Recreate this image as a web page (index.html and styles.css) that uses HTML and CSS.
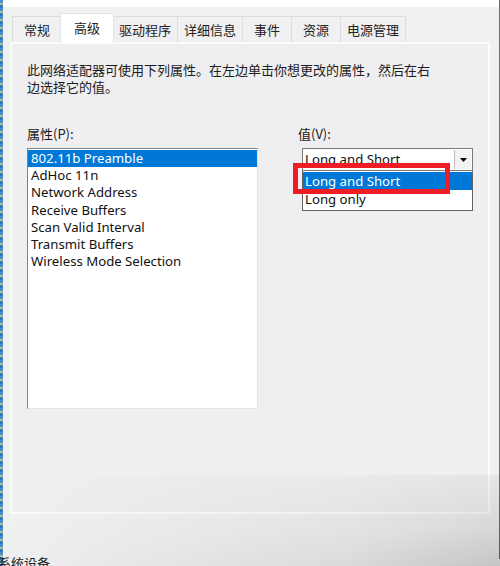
FILE: index.html
```html
<!DOCTYPE html>
<html>
<head>
<meta charset="utf-8">
<link rel="stylesheet" href="styles.css">
</head>
<body>
<div class="screen">
  <div class="edge"></div>
  <div class="window">
    <div class="titlestrip"></div>
    <div class="tabs">
      <div class="tab">常规</div>
      <div class="tab active">高级</div>
      <div class="tab">驱动程序</div>
      <div class="tab">详细信息</div>
      <div class="tab">事件</div>
      <div class="tab">资源</div>
      <div class="tab">电源管理</div>
    </div>
    <div class="panel">
      <p class="desc">此网络适配器可使用下列属性。在左边单击你想更改的属性，然后在右<br>边选择它的值。</p>
      <div class="cols">
        <div class="col-left">
          <div class="label">属性(P):</div>
          <div class="listbox">
            <div class="item selected">802.11b Preamble</div>
            <div class="item">AdHoc 11n</div>
            <div class="item">Network Address</div>
            <div class="item">Receive Buffers</div>
            <div class="item">Scan Valid Interval</div>
            <div class="item">Transmit Buffers</div>
            <div class="item">Wireless Mode Selection</div>
          </div>
        </div>
        <div class="col-right">
          <div class="label">值(V):</div>
          <div class="combo">
            <div class="combo-box">
              <span class="combo-text">Long and Short</span>
              <span class="combo-btn"><svg width="7" height="4" viewBox="0 0 7 4"><path d="M0 0H7L3.5 4Z" fill="#000"/></svg></span>
            </div>
            <div class="dropdown">
              <div class="opt selected">Long and Short</div>
              <div class="opt">Long only</div>
            </div>
            <div class="highlight"></div>
          </div>
        </div>
      </div>
    </div>
    <div class="footer"></div>
  </div>
  <div class="status">系统设备</div>
  <div class="shadow"></div>
</div>
</body>
</html>
```
FILE: styles.css
```css
html, body {
  margin: 0;
  padding: 0;
}
body {
  width: 500px;
  height: 566px;
  overflow: hidden;
  background: #f0eff1;
  font-family: "Noto Sans", "Noto Sans CJK SC", sans-serif;
  font-size: 13px;
  color: #1a1a1a;
}
.screen {
  position: relative;
  width: 500px;
  height: 566px;
  display: flex;
  overflow: hidden;
}
.edge {
  width: 3px;
  flex: none;
  background: repeating-linear-gradient(180deg, #4d8fc9 0 3px, #9fc3a0 3px 5px, #3a78b8 5px 8px);
}
.window {
  flex: 1;
  display: flex;
  flex-direction: column;
  background: #f0eff1;
  border-right: 3px solid #6e6e6e;
  height: 559px;
}
.titlestrip {
  height: 7px;
  background: #ffffff;
  flex: none;
}
.tabs {
  display: flex;
  padding-left: 9px;
  margin-top: 6px;
  align-items: flex-end;
  height: 29px;
  flex: none;
}
.tab {
  height: 26px;
  line-height: 26px;
  min-width: 50px;
  padding: 0 6px;
  text-align: center;
  border: 1px solid #dcdcdc;
  border-bottom: none;
  margin-right: -1px;
  background: #f0eff1;
  font-family: "Noto Sans CJK SC", sans-serif;
  font-size: 13px;
  color: #222;
  box-sizing: border-box;
}
.tab.active {
  height: 30px;
  line-height: 28px;
  min-width: 54px;
  background: #ffffff;
  border-color: #e4e4e4;
  margin: 0 -2px 0 -1px;
  position: relative;
  z-index: 1;
  margin-bottom: -1px;
}
.panel {
  margin: 0 9px 0 7px;
  border: 2px solid #fbfbfb;
  background: #efeef0;
  height: 472px;
  box-sizing: border-box;
  padding: 17px 15px 0 15px;
  flex: none;
}
.desc {
  margin: 0;
  font-family: "Noto Sans CJK SC", sans-serif;
  font-size: 13px;
  line-height: 17px;
  color: #1c1c1c;
}
.cols {
  display: flex;
  margin-top: 30px;
}
.col-left {
  width: 231px;
}
.col-right {
  margin-left: 40px;
}
.label {
  font-family: "Noto Sans CJK SC", sans-serif;
  font-size: 13px;
  height: 17px;
  line-height: 17px;
  margin-bottom: 6px;
}
.listbox {
  width: 231px;
  height: 261px;
  background: #fff;
  border-left: 1px solid #828282;
  border-top: 1px solid #828282;
  border-right: 1px solid #e3e3e3;
  border-bottom: 1px solid #e3e3e3;
  box-sizing: border-box;
  padding: 1px 0 0 0;
}
.item {
  height: 17.2px;
  line-height: 17px;
  padding-left: 3px;
  font-size: 13.2px;
  color: #111;
  white-space: nowrap;
}
.item.selected {
  background: #0078d7;
  color: #fff;
}
.combo {
  position: relative;
  margin-left: 4px;
  margin-top: 1px;
  width: 171px;
}
.combo-box {
  height: 23px;
  box-sizing: border-box;
  border: 1px solid #7a7a7a;
  background: #fff;
  display: flex;
  align-items: center;
}
.combo-text {
  flex: 1;
  padding-left: 2px;
  font-size: 13.2px;
  line-height: 17px;
  color: #111;
}
.combo-btn {
  width: 16px;
  height: 19px;
  margin-right: 1px;
  border-left: 1px solid #bdbdbd;
  background: #f3f3f3;
  display: flex;
  align-items: center;
  justify-content: center;
}
.dropdown {
  border: 1px solid #646464;
  border-top: none;
  background: #fff;
  padding: 1px 0 2px 0;
}
.opt {
  height: 18px;
  line-height: 18px;
  padding-left: 2px;
  font-size: 13.2px;
  color: #111;
}
.opt.selected {
  background: #0078d7;
  color: #fff;
}
.highlight {
  position: absolute;
  left: -9px;
  top: 15px;
  width: 157px;
  height: 31px;
  box-sizing: border-box;
  border: 5px solid #ee1c25;
}
.footer {
  flex: 1;
}
.status {
  position: absolute;
  left: -2px;
  bottom: -6px;
  font-family: "Noto Sans CJK SC", sans-serif;
  font-size: 13px;
  color: #222;
}
.shadow {
  position: absolute;
  left: 0;
  right: 0;
  top: 475px;
  bottom: 0;
  background: linear-gradient(180deg, rgba(0,0,0,0.04) 0%, rgba(0,0,0,0.1) 60%, rgba(0,0,0,0.18) 100%);
  -webkit-mask-image: linear-gradient(90deg, rgba(0,0,0,0) 0%, rgba(0,0,0,0.5) 70%, rgba(0,0,0,1) 100%);
  pointer-events: none;
}
```
